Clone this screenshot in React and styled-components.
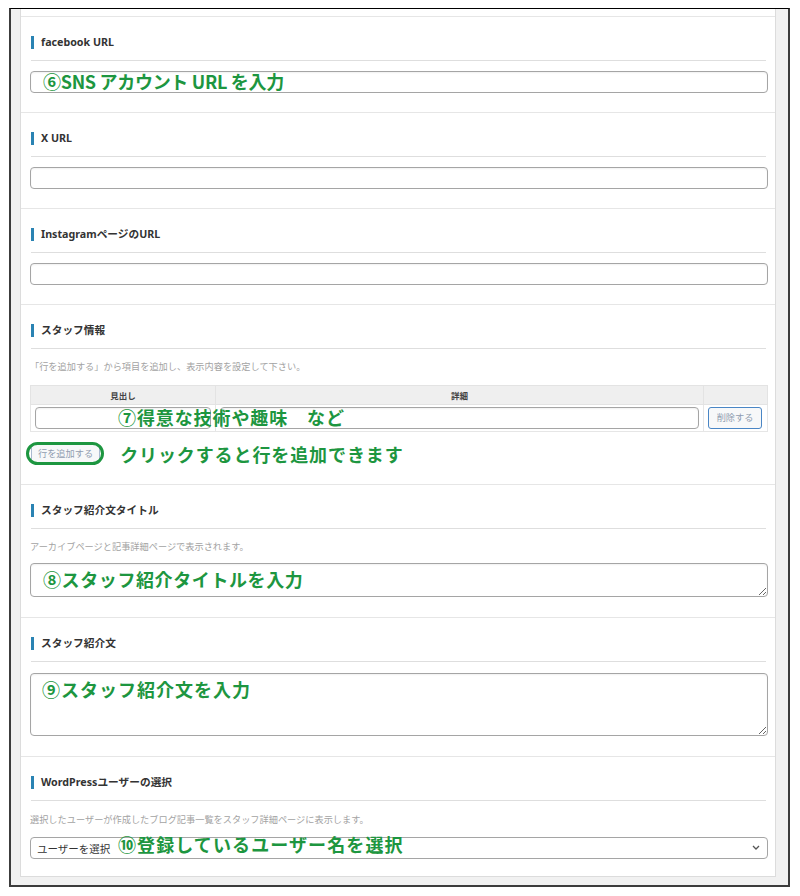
import React from 'react';
import styled, { createGlobalStyle } from 'styled-components';

const GlobalStyle = createGlobalStyle`
  body {
    margin: 0;
    background: #fff;
    font-family: 'Noto Sans', 'Noto Sans CJK JP', sans-serif;
  }
`;

const Frame = styled.div`
  margin: 8px 10px 0 9px;
  border: 2px solid #3c3c3c;
  border-top: 1px solid #000;
  background: #f1f1f1;
  padding: 0 12px 8px 9px;
`;

const Panel = styled.div`
  background: #fff;
  border: 1px solid #dcdcdc;
  border-top: none;
`;

const Stub = styled.div`
  height: 7px;
  border-bottom: 1px solid #e6e6e6;
`;

const Section = styled.section`
  padding: 19px 7px ${(p) => p.$bottom || 19}px 9px;
  border-bottom: ${(p) => (p.$last ? 'none' : '1px solid #e6e6e6')};
`;

const Heading = styled.h3`
  margin: 0 0 0 1px;
  display: flex;
  align-items: center;
  gap: 7px;
  height: 13px;
  font-size: 10.7px;
  line-height: 13px;
  font-weight: 700;
  color: #333;

  &::before {
    content: '';
    width: 3px;
    height: 13px;
    background: #2a83b3;
  }
`;

const Rule = styled.hr`
  margin: 11px 2px 0 1px;
  border: none;
  border-top: 1px solid #dedede;
  height: 0;
`;

const Desc = styled.p`
  margin: ${(p) => p.$gap || 10}px 0 0;
  font-size: 9.2px;
  line-height: 14px;
  color: #a3a3a3;
  font-family: 'Noto Sans CJK JP', sans-serif;
`;

const Field = styled.div`
  position: relative;
  margin-top: ${(p) => p.$gap || 10}px;
`;

const TextInput = styled.input`
  display: block;
  box-sizing: border-box;
  width: 100%;
  height: 22px;
  margin: 0;
  border: 1px solid #a5a5a5;
  border-radius: 4px;
  background: #fff;
  box-shadow: inset 0 1px 2px rgba(0, 0, 0, 0.06);
  padding: 0 6px;
`;

const TextArea = styled.textarea`
  display: block;
  box-sizing: border-box;
  width: 100%;
  height: ${(p) => p.$h}px;
  border: 1px solid #a5a5a5;
  border-radius: 4px;
  box-shadow: inset 0 1px 2px rgba(0, 0, 0, 0.06);
  resize: vertical;
  padding: 4px 6px;
  margin: 0;
`;

const Select = styled.select`
  display: block;
  box-sizing: border-box;
  width: 100%;
  height: 22px;
  appearance: none;
  border: 1px solid #a5a5a5;
  border-radius: 4px;
  background: #fff;
  padding: 0 6px;
  font-family: 'Noto Sans CJK JP', sans-serif;
  font-size: 10.5px;
  color: #333;
`;

const Chevron = styled.svg`
  position: absolute;
  right: 8px;
  top: 8px;
  pointer-events: none;
`;

const Note = styled.span`
  position: absolute;
  top: ${(p) => p.$top}px;
  left: ${(p) => p.$left}px;
  white-space: pre;
  font-family: 'Noto Sans CJK JP', sans-serif;
  font-weight: 700;
  font-size: 18px;
  line-height: 18px;
  letter-spacing: ${(p) => p.$ls || 0}px;
  color: #1d9640;
  pointer-events: none;
`;

const TableWrap = styled.div`
  position: relative;
  margin-top: 12px;
`;

const Table = styled.table`
  width: 100%;
  border-collapse: collapse;
  font-family: 'Noto Sans CJK JP', sans-serif;
`;

const Th = styled.th`
  height: 18px;
  padding: 0;
  background: #efefef;
  border: 1px solid #e3e3e3;
  font-size: 8.5px;
  font-weight: 700;
  color: #444;
  width: ${(p) => p.$w}px;
`;

const Td = styled.td`
  padding: 2px 4px;
  border: 1px solid #e6e6e6;
  line-height: 0;
`;

const SmallButton = styled.button`
  display: block;
  box-sizing: border-box;
  height: ${(p) => p.$h || 22}px;
  width: ${(p) => p.$w || 'auto'};
  padding: 0 6px;
  border: 1px solid ${(p) => p.$border || '#4a86c5'};
  border-radius: 3px;
  background: #f7f8f9;
  color: #8f9cb0;
  font-family: 'Noto Sans CJK JP', sans-serif;
  font-size: 9.2px;
  line-height: 1;
  white-space: nowrap;
`;

const AddRow = styled.div`
  position: relative;
  margin-top: 11px;
  height: 22px;
  display: flex;
  align-items: center;
  gap: 20px;
  padding-left: 1px;
`;

const Ring = styled.span`
  position: absolute;
  left: -4px;
  top: -1px;
  width: 72px;
  height: 17px;
  border: 3px solid #1d9640;
  border-radius: 12px;
  pointer-events: none;
`;

const Hint = styled.span`
  font-family: 'Noto Sans CJK JP', sans-serif;
  font-weight: 700;
  font-size: 18px;
  line-height: 22px;
  letter-spacing: 0.9px;
  color: #1d9640;
`;

function UrlSection({ label, note }) {
  return (
    <Section>
      <Heading>{label}</Heading>
      <Rule />
      <Field>
        <TextInput type="text" />
        {note && (
          <Note $top={1} $left={13} $ls={-0.3}>
            {note}
          </Note>
        )}
      </Field>
    </Section>
  );
}

export default function App() {
  return (
    <>
      <GlobalStyle />
      <Frame>
        <Panel>
          <Stub />
          <UrlSection label="facebook URL" note="⑥SNS アカウント URL を入力" />
          <UrlSection label="X URL" />
          <UrlSection label="InstagramページのURL" />

          <Section>
            <Heading>スタッフ情報</Heading>
            <Rule />
            <Desc>「行を追加する」から項目を追加し、表示内容を設定して下さい。</Desc>
            <TableWrap>
              <Table>
                <thead>
                  <tr>
                    <Th $w={184}>見出し</Th>
                    <Th>詳細</Th>
                    <Th $w={63}></Th>
                  </tr>
                </thead>
                <tbody>
                  <tr>
                    <Td>
                      <TextInput type="text" />
                    </Td>
                    <Td>
                      <TextInput type="text" />
                    </Td>
                    <Td>
                      <SmallButton $w="54px">削除する</SmallButton>
                    </Td>
                  </tr>
                </tbody>
              </Table>
              <Note $top={23} $left={88} $ls={0.9}>
                ⑦得意な技術や趣味　など
              </Note>
            </TableWrap>
            <AddRow>
              <SmallButton $h={20} $border="#a9bad0">
                行を追加する
              </SmallButton>
              <Ring />
              <Hint>クリックすると行を追加できます</Hint>
            </AddRow>
          </Section>

          <Section $bottom={20}>
            <Heading>スタッフ紹介文タイトル</Heading>
            <Rule />
            <Desc>アーカイブページと記事詳細ページで表示されます。</Desc>
            <Field>
              <TextArea $h={34} />
              <Note $top={7} $left={13} $ls={0.6}>
                ⑧スタッフ紹介タイトルを入力
              </Note>
            </Field>
          </Section>

          <Section $bottom={20}>
            <Heading>スタッフ紹介文</Heading>
            <Rule />
            <Field $gap={11}>
              <TextArea $h={63} />
              <Note $top={7} $left={12} $ls={1}>
                ⑨スタッフ紹介文を入力
              </Note>
            </Field>
          </Section>

          <Section $last $bottom={17}>
            <Heading>WordPressユーザーの選択</Heading>
            <Rule />
            <Desc $gap={11}>選択したユーザーが作成したブログ記事一覧をスタッフ詳細ページに表示します。</Desc>
            <Field $gap={11}>
              <Select defaultValue="">
                <option value="">ユーザーを選択</option>
              </Select>
              <Chevron width="8" height="5" viewBox="0 0 8 5">
                <path d="M1 1l3 3 3-3" fill="none" stroke="#555" strokeWidth="1.3" />
              </Chevron>
              <Note $top={-2} $left={88} $ls={1.1}>
                ⑩登録しているユーザー名を選択
              </Note>
            </Field>
          </Section>
        </Panel>
      </Frame>
    </>
  );
}
